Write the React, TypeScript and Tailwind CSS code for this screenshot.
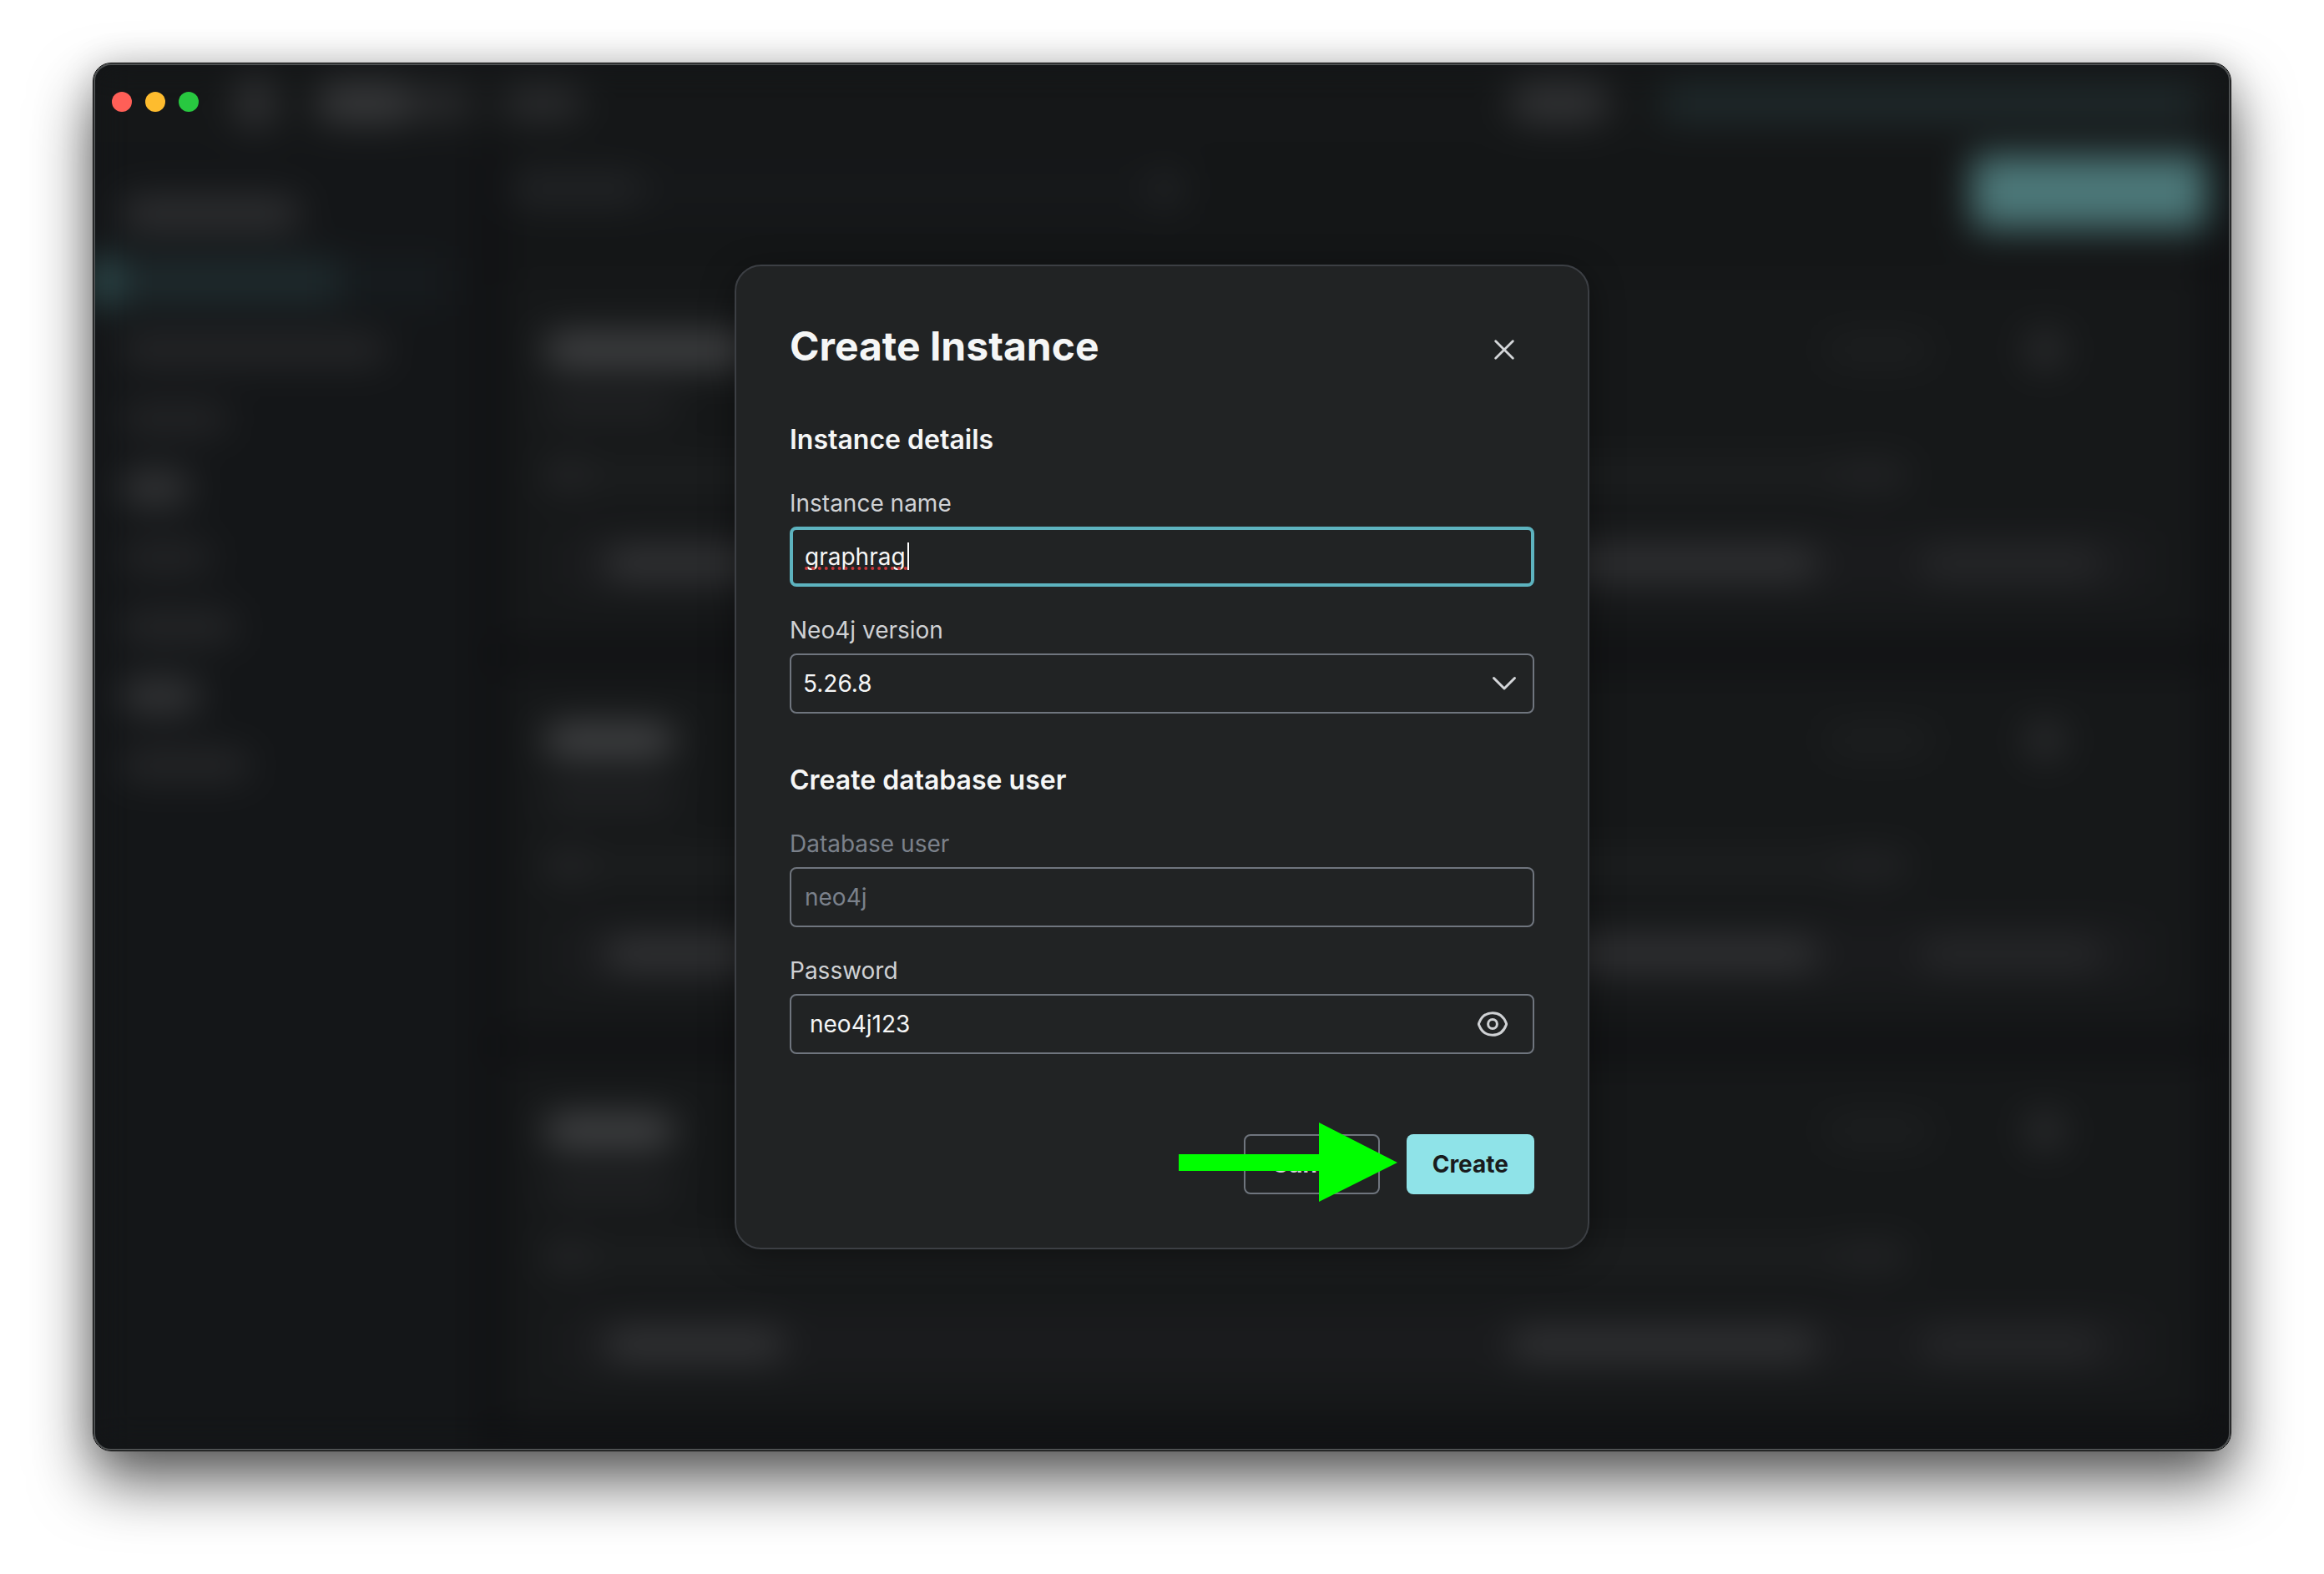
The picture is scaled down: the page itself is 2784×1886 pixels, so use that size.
import React, { useState } from "react";

const fieldBox =
  "h-[72px] w-full rounded-lg border-2 border-[#6f757e] bg-transparent text-[28px] leading-10 text-[#f5f6f6] outline-none";

function SidebarRow({ className }: { className: string }) {
  return (
    <div className="flex h-[83px] items-center pl-8">
      <div className={`rounded-full ${className}`} />
    </div>
  );
}

function InstanceCard({ title }: { title: string }) {
  return (
    <div className="flex h-[436px] flex-col rounded-2xl bg-[#161819] px-12 pt-[62px]">
      <div className="flex h-12 items-center justify-between">
        <div className={`h-10 rounded-full bg-[#434446] ${title}`} />
        <div className="flex items-center gap-28 pr-[118px]">
          <div className="h-9 w-32 rounded-full bg-[#1d1f20]" />
          <div className="size-12 rounded-full bg-[#2a2b2d]" />
        </div>
      </div>
      <div className="mt-7 h-8 w-40 rounded-full bg-[#212224]" />
      <div className="mt-12 flex items-center">
        <div className="h-9 w-14 rounded-full bg-[#252628]" />
        <div className="h-7 flex-1 bg-[#1e2021]" />
        <div className="mr-[304px] h-8 w-24 rounded-full bg-[#232426]" />
      </div>
      <div className="mx-4 mt-12 flex h-20 items-center rounded-2xl bg-[#1a1b1d] pl-14 pr-14">
        <div className="h-9 w-[215px] rounded-full bg-[#343537]" />
        <div className="ml-auto h-9 w-[370px] rounded-full bg-[#323335]" />
        <div className="ml-[122px] h-9 w-[220px] rounded-full bg-[#27282a]" />
      </div>
    </div>
  );
}

function AppBackdrop() {
  return (
    <div aria-hidden="true" className="flex flex-1 flex-col bg-[#131517] blur-[22px]">
      <div className="flex h-[94px] items-center bg-[#151718] pr-10">
        <div className="ml-[170px] h-16 w-12 rounded-full bg-[#303133]" />
        <div className="ml-12 h-12 w-[120px] rounded-full bg-[#38393b]" />
        <div className="h-10 w-[68px] rounded-full bg-[#2a2b2d]" />
        <div className="ml-9 h-10 w-24 rounded-full bg-[#2b2c2e]" />
        <div className="ml-auto h-12 w-[120px] rounded-full bg-[#323335]" />
        <div className="ml-16 h-11 w-[640px] bg-[#1f2a2c]" />
      </div>
      <div className="flex flex-1">
        <div className="w-[460px] bg-[#141618] pt-11">
          <SidebarRow className="h-10 w-[216px] bg-[#2f3032]" />
          <div className="flex h-[80px] items-center">
            <div className="h-14 w-6 bg-[#3a6466]" />
            <div className="h-14 w-[270px] bg-[#1e2a2d]" />
            <div className="h-14 w-[130px] bg-[#161b1e]" />
          </div>
          <SidebarRow className="h-9 w-[320px] bg-[#262729]" />
          <SidebarRow className="h-9 w-[130px] bg-[#242527]" />
          <SidebarRow className="h-10 w-[84px] bg-[#353638]" />
          <SidebarRow className="h-9 w-[110px] bg-[#242527]" />
          <SidebarRow className="h-9 w-[140px] bg-[#262729]" />
          <SidebarRow className="h-10 w-[96px] bg-[#353638]" />
          <SidebarRow className="h-9 w-[156px] bg-[#262729]" />
        </div>
        <div className="flex flex-1 flex-col gap-8 bg-[#101113] pb-8 pl-8 pr-8">
          <div className="-mb-8 flex h-[163px] items-start bg-[#141617]">
            <div className="mt-6 flex h-16 w-[820px] items-center justify-between bg-[#16181a] px-2">
              <div className="h-9 w-[160px] rounded-full bg-[#222426]" />
              <div className="size-10 rounded-full bg-[#222426]" />
            </div>
            <div className="-mr-1 ml-auto mt-4 h-[88px] w-[282px] rounded-lg bg-[#4c7879]" />
          </div>
          <InstanceCard title="w-[260px]" />
          <InstanceCard title="w-[156px]" />
          <InstanceCard title="w-[156px]" />
        </div>
      </div>
    </div>
  );
}

function Field({
  id,
  label,
  muted,
  children,
}: {
  id: string;
  label: string;
  muted?: boolean;
  children: React.ReactNode;
}) {
  return (
    <div className="flex flex-col gap-2">
      <label htmlFor={id} className={`text-[28px] leading-10 ${muted ? "text-[#7b818b]" : "text-[#cfd1d4]"}`}>
        {label}
      </label>
      <div className="relative flex">{children}</div>
    </div>
  );
}

function CreateInstanceDialog() {
  const [name, setName] = useState("graphrag");
  const [password, setPassword] = useState("neo4j123");

  return (
    <form
      role="dialog"
      aria-labelledby="dialog-title"
      onSubmit={(e) => e.preventDefault()}
      className="w-[1024px] max-w-full rounded-[32px] border-2 border-[#3c3f44] bg-[#212324] p-16 shadow-[0_8px_40px_rgba(0,0,0,0.4)]"
    >
      <div className="flex items-start justify-between">
        <h1 id="dialog-title" className="text-[48px] font-bold leading-[64px] text-[#f5f6f6]">
          Create Instance
        </h1>
        <button type="button" aria-label="Close" className="flex size-[72px] items-center justify-center text-[#d4d6d9]">
          <svg viewBox="0 0 24 24" className="size-6" fill="none" stroke="currentColor" strokeWidth="2.8" strokeLinecap="round">
            <path d="M1.7 1.7 22.3 22.3M22.3 1.7 1.7 22.3" />
          </svg>
        </button>
      </div>

      <section className="mt-12 flex flex-col gap-8">
        <h2 className="text-[32px] font-semibold leading-[48px] text-[#f5f6f6]">Instance details</h2>
        <Field id="instance-name" label="Instance name">
          <input
            id="instance-name"
            type="text"
            value={name}
            spellCheck={false}
            onChange={(e) => setName(e.target.value)}
            className="h-[72px] w-full rounded-lg border-4 border-[#5db3bf] bg-transparent px-[14px] text-[28px] leading-10 text-[#f5f6f6] outline-none"
          />
          <div aria-hidden="true" className="pointer-events-none absolute left-[18px] top-0 flex h-[52px] items-end">
            <div className="w-[123px] border-b-4 border-dotted border-[#c9373a]" />
            <div className="h-[33px] w-[2px] bg-white" />
          </div>
        </Field>
        <Field id="neo4j-version" label="Neo4j version">
          <select id="neo4j-version" defaultValue="5.26.8" className={`${fieldBox} appearance-none px-[14px]`}>
            <option value="5.26.8">5.26.8</option>
          </select>
          <svg
            viewBox="0 0 32 32"
            className="pointer-events-none absolute right-5 top-5 size-8 text-[#d4d6d9]"
            fill="none"
            stroke="currentColor"
            strokeWidth="3"
            strokeLinecap="round"
            strokeLinejoin="round"
          >
            <path d="M3.5 9.5 16 22 28.5 9.5" />
          </svg>
        </Field>
      </section>

      <section className="mt-14 flex flex-col gap-8">
        <h2 className="text-[32px] font-semibold leading-[48px] text-[#f5f6f6]">Create database user</h2>
        <Field id="database-user" label="Database user" muted>
          <input
            id="database-user"
            type="text"
            defaultValue="neo4j"
            disabled
            className="h-[72px] w-full rounded-lg border-2 border-[#6f757e] bg-transparent px-4 text-[28px] leading-10 text-[#7b818b]"
          />
        </Field>
        <Field id="password" label="Password">
          <input
            id="password"
            type="text"
            value={password}
            onChange={(e) => setPassword(e.target.value)}
            className={`${fieldBox} pl-[22px] pr-20`}
          />
          <button
            type="button"
            aria-label="Hide password"
            className="absolute right-[26px] top-3 flex size-12 items-center justify-center text-[#cfd1d4]"
          >
            <svg viewBox="0 0 36 30" className="h-[30px] w-9" fill="none" stroke="currentColor" strokeWidth="3" strokeLinejoin="round">
              <path d="M1.7 16.1a2.6 2.6 0 0 1 0-2.2C4.6 6.2 10.7 1.7 18 1.7S31.4 6.2 34.3 13.9a2.6 2.6 0 0 1 0 2.2C31.4 23.800 25.300 28.300 18 28.300S4.600 23.800 1.700 16.100Z" />
              <circle cx="18" cy="15" r="5.400" />
            </svg>
          </button>
        </Field>
      </section>

      <div className="relative mt-24 flex justify-end gap-8">
        <button
          type="button"
          className="h-[72px] rounded-lg border-2 border-[#6f757e] px-8 text-[28px] font-bold leading-10 text-[#cfd1d4]"
        >
          Cancel
        </button>
        <button type="submit" className="h-[72px] rounded-lg bg-[#8fe3e8] px-[31px] text-[28px] font-bold leading-10 text-[#1a1b1d]">
          Create
        </button>
        <svg
          aria-hidden="true"
          viewBox="0 0 262 96"
          className="pointer-events-none absolute right-[164px] -top-[14px] h-24 w-[262px]"
        >
          <path d="M0 38h168V0l94 48-94 47V58H0Z" fill="#00ff00" />
        </svg>
      </div>
    </form>
  );
}

export default function App() {
  return (
    <main className="flex min-h-screen bg-white px-[111px] pb-[147px] pt-[75px] font-['Inter',sans-serif]">
      <div className="flex flex-1 rounded-[22px] border border-black shadow-[0_36px_72px_rgba(0,0,0,0.64),0_0_40px_rgba(0,0,0,0.14)]">
        <div className="relative flex flex-1 overflow-hidden rounded-[21px] bg-[#131517]">
          <AppBackdrop />
          <div className="absolute inset-0 grid place-items-center">
            <CreateInstanceDialog />
          </div>
          <div className="absolute left-[22px] top-[34px] flex gap-4">
            <button type="button" aria-label="Close window" className="size-6 rounded-full bg-[#ff5f57]" />
            <button type="button" aria-label="Minimize window" className="size-6 rounded-full bg-[#febc2e]" />
            <button type="button" aria-label="Zoom window" className="size-6 rounded-full bg-[#28c840]" />
          </div>
          <div className="pointer-events-none absolute inset-0 rounded-[21px] border-2 border-[#4e5152]" />
        </div>
      </div>
    </main>
  );
}
